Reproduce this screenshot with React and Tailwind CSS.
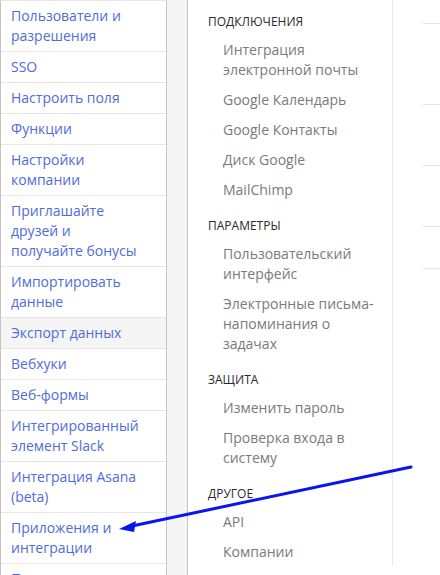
import React from 'react';

const leftItems = [
  'Пользователи и разрешения',
  'SSO',
  'Настроить поля',
  'Функции',
  'Настройки компании',
  'Приглашайте друзей и получайте бонусы',
  'Импортировать данные',
  'Экспорт данных',
  'Вебхуки',
  'Веб-формы',
  'Интегрированный элемент Slack',
  'Интеграция Asana (beta)',
  'Приложения и интеграции',
  'Партнерская программа',
];

const sections = [
  {
    title: 'Подключения',
    items: ['Интеграция электронной почты', 'Google Календарь', 'Google Контакты', 'Диск Google', 'MailChimp'],
  },
  {
    title: 'Параметры',
    items: ['Пользовательский интерфейс', 'Электронные письма-напоминания о задачах'],
  },
  {
    title: 'Защита',
    items: ['Изменить пароль', 'Проверка входа в систему'],
  },
  {
    title: 'Другое',
    items: ['API', 'Компании'],
  },
];

// faded lines of the panel on the far right
const stubs = [23, 104, 165, 226, 268];

const App = () => {
  return (
    <div
      className="relative flex h-[575px] w-[440px] overflow-hidden bg-white"
      style={{ fontFamily: '"Open Sans", "Noto Sans", sans-serif' }}
    >
      <aside className="w-[167px] shrink-0 border-x border-t border-x-[#c4c4c4] border-t-[#e6e6e6] bg-white">
        {leftItems.map((item) => (
          <div
            key={item}
            className={`border-b border-[#e6e6e6] pl-[10px] pr-[20px] py-[5px] text-[14px] leading-5 text-[#4f6cdc] ${
              item === 'Экспорт данных' ? 'bg-[#f5f5f5]' : ''
            }`}
          >
            {item}
          </div>
        ))}
      </aside>

      <div className="w-[20px] shrink-0 bg-[#f5f5f5]" />

      <section className="w-[206px] shrink-0 border-l border-[#c4c4c4] bg-white pt-px">
        <div className="h-[565px] border-r border-[#e8e8e8] pr-[10px]">
          {sections.map((s) => (
            <div key={s.title}>
              <h3 className="pl-[20px] pt-[13px] pb-[5px] text-[12px] leading-4 font-medium uppercase text-[#2a2a2a]">
                {s.title}
              </h3>
              {s.items.map((item) => (
                <div key={item} className="py-[5px] pl-[35px] text-[14px] leading-5 text-[#7a7a7a]">
                  {item}
                </div>
              ))}
            </div>
          ))}
        </div>
      </section>

      <div className="flex flex-1 flex-col">
        {stubs.map((y, i) => (
          <div
            key={y}
            className="ml-[30px] h-px bg-[#e3e3e3]"
            style={{ marginTop: i === 0 ? y : y - stubs[i - 1] - 1 }}
          />
        ))}
      </div>

      <svg className="pointer-events-none absolute inset-0" width="440" height="575" viewBox="0 0 440 575">
        <line x1="411" y1="467" x2="132" y2="526" stroke="#0a14ee" strokeWidth="3" strokeLinecap="round" />
        <polygon points="119,529 136,521 134,532" fill="#0a14ee" />
      </svg>
    </div>
  );
};

export default App;
